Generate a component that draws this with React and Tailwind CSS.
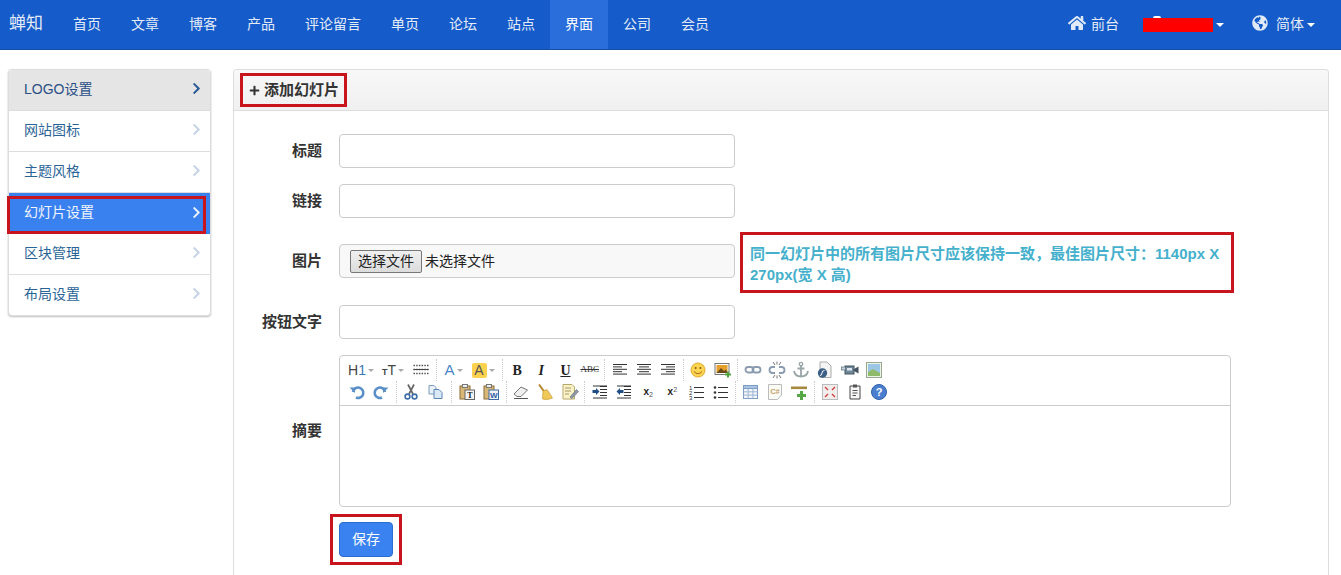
import { FaHome, FaGlobeAmericas, FaChevronRight, FaPlus } from 'react-icons/fa';

const navItems = ['首页', '文章', '博客', '产品', '评论留言', '单页', '论坛', '站点', '界面', '公司', '会员'];
const sideItems = ['LOGO设置', '网站图标', '主题风格', '幻灯片设置', '区块管理', '布局设置'];

const font = 'font-["Liberation_Sans","Noto_Sans_CJK_SC",sans-serif]';

const Caret = ({ className = '' }) => (
    <span className={`inline-block w-0 h-0 border-x-[4px] border-x-transparent border-t-[4px] border-t-white ${className}`} />
);

const Ic = ({ children }) => (
    <svg width="18" height="18" viewBox="0 0 18 18" className="block">{children}</svg>
);

const Lines = ({ rows, color = '#333' }) => (
    <Ic>
        {rows.map(([x1, x2], i) => (
            <line key={i} x1={x1} x2={x2} y1={3.5 + i * 2.4} y2={3.5 + i * 2.4} stroke={color} strokeWidth="1" />
        ))}
    </Ic>
);

const Slot = ({ children, w = 'w-[24.2px]' }) => (
    <div className={`${w} h-[22px] flex items-center justify-center shrink-0`}>{children}</div>
);

const Sep = () => (
    <div className="w-[6px] h-[22px] shrink-0 flex justify-center">
        <div className="h-full border-l border-dotted border-[#ccc]" />
    </div>
);

const SmallCaret = () => (
    <span className="inline-block ml-[2px] w-0 h-0 border-x-[3px] border-x-transparent border-t-[3px] border-t-[#aaa]" />
);

const row1 = (
    <>
        <Slot w="w-[32px]"><span className="text-[14px] text-[#444]">H<span className="text-[#3a78b8]">1</span></span><SmallCaret /></Slot>
        <Slot w="w-[32px]"><span className="text-[#444] font-bold"><span className="text-[9px]">T</span><span className="text-[14px] font-normal">T</span></span><SmallCaret /></Slot>
        <Slot w="w-[23px]">
            <Ic>
                {[4.5, 8.5, 12.5].map((y) => (
                    <line key={y} x1="1.5" x2="16.5" y1={y} y2={y} stroke="#555" strokeWidth="1.5" strokeDasharray="1.5 1.2" />
                ))}
                <line x1="1.5" x2="16.5" y1="8.5" y2="8.5" stroke="#444" strokeWidth="1" />
            </Ic>
        </Slot>
        <Slot w="w-[8px]"><Sep /></Slot>
        <Slot w="w-[27px]"><span className="text-[15px] text-[#4a86c8]">A</span><SmallCaret /></Slot>
        <Slot w="w-[32px]"><span className="w-[15px] h-[15px] rounded-[2px] bg-[#fcd24e] text-[14px] leading-[15px] text-center text-[#555]">A</span><SmallCaret /></Slot>
        <Sep />
        <Slot><span className="font-['Liberation_Serif',serif] font-bold text-[14px] text-[#222]">B</span></Slot>
        <Slot><span className="font-['Liberation_Serif',serif] font-bold italic text-[14px] text-[#222]">I</span></Slot>
        <Slot><span className="font-['Liberation_Serif',serif] font-bold underline text-[14px] text-[#222]">U</span></Slot>
        <Slot><span className="font-['Liberation_Serif',serif] line-through text-[9px] text-[#333]">ABC</span></Slot>
        <Sep />
        <Slot><Lines rows={[[2, 16], [2, 11], [2, 16], [2, 11], [2, 16]]} /></Slot>
        <Slot><Lines rows={[[2, 16], [4, 14], [2, 16], [4, 14], [2, 16]]} /></Slot>
        <Slot><Lines rows={[[2, 16], [7, 16], [2, 16], [7, 16], [2, 16]]} /></Slot>
        <Sep />
        <Slot>
            <Ic>
                <circle cx="9" cy="9" r="7" fill="#fbd450" stroke="#e3a92e" />
                <circle cx="6.6" cy="7" r="1" fill="#8a5a10" />
                <circle cx="11.4" cy="7" r="1" fill="#8a5a10" />
                <path d="M5 10.5 Q9 15 13 10.5" fill="none" stroke="#a8681a" strokeWidth="1" />
            </Ic>
        </Slot>
        <Slot>
            <Ic>
                <rect x="1" y="2.5" width="14" height="11" fill="#fff" stroke="#777" />
                <rect x="2.5" y="4" width="11" height="8" fill="#e5a02b" />
                <path d="M2.5 12 L7 7 L10 10 L12 8.5 L13.5 12 Z" fill="#6b4a1c" />
                <path d="M13 10.5 h2 v2 h2 v2 h-2 v2 h-2 v-2 h-2 v-2 h2 z" fill="#4fa53c" />
            </Ic>
        </Slot>
        <Sep />
        <Slot>
            <Ic>
                <rect x="1.5" y="6" width="8" height="5.5" rx="2.7" fill="none" stroke="#8a9bb0" strokeWidth="1.8" />
                <rect x="8.5" y="6" width="8" height="5.5" rx="2.7" fill="none" stroke="#8a9bb0" strokeWidth="1.8" />
            </Ic>
        </Slot>
        <Slot>
            <Ic>
                <path d="M7 6 H4.5 a2.7 2.7 0 0 0 0 6 H7 M11 6 h2.5 a2.7 2.7 0 0 1 0 6 H11" fill="none" stroke="#8a9bb0" strokeWidth="1.8" />
                <path d="M5 1 L7 4 M9 0.5 V3.5 M13 1 L11 4 M5 17 L7 14 M9 17.5 V14.5 M13 17 L11 14" stroke="#777" strokeWidth="1" />
            </Ic>
        </Slot>
        <Slot>
            <Ic>
                <circle cx="9" cy="3" r="1.7" fill="none" stroke="#9aa5a8" strokeWidth="1.3" />
                <path d="M9 4.5 V15.5 M5.5 7.5 H12.5 M2 10 Q3 15.5 9 15.5 Q15 15.5 16 10" fill="none" stroke="#9aa5a8" strokeWidth="1.8" />
            </Ic>
        </Slot>
        <Slot>
            <Ic>
                <path d="M4 1 H11 L15 5 V16.5 H4 Z" fill="#f4f4f4" stroke="#aaa" />
                <circle cx="6.5" cy="12" r="4.7" fill="#3c5f86" />
                <path d="M8.5 9.5 Q6 9.5 6 12 Q6 14.5 4 14.5" fill="none" stroke="#fff" strokeWidth="1" />
            </Ic>
        </Slot>
        <Slot>
            <Ic>
                <rect x="4" y="5" width="9" height="8" fill="#6e8799" stroke="#44535f" />
                <rect x="0.5" y="6" width="4" height="3" fill="#c6d5df" stroke="#5b6d7a" strokeWidth=".7" />
                <path d="M13 8 L17.5 5.5 V12.5 L13 10 Z" fill="#44535f" />
                <rect x="6" y="7" width="5" height="2.5" fill="#dfe8ee" />
            </Ic>
        </Slot>
        <Slot>
            <Ic>
                <rect x="1.5" y="1.5" width="15" height="15" fill="#eef3e8" stroke="#97a88f" />
                <rect x="3" y="3" width="12" height="12" fill="#9cc6e6" />
                <path d="M3 15 V11 L8 8 L15 12 V15 Z" fill="#8fba6a" />
            </Ic>
        </Slot>
    </>
);

const row2 = (
    <>
        <Slot>
            <Ic>
                <path d="M5 9 A5.2 5.2 0 1 1 8 14.5" fill="none" stroke="#5b8fc8" strokeWidth="2.6" />
                <path d="M1.5 4.5 H7 V10 Z" fill="#5b8fc8" />
            </Ic>
        </Slot>
        <Slot>
            <Ic>
                <path d="M13 9 A5.2 5.2 0 1 0 10 14.5" fill="none" stroke="#5b8fc8" strokeWidth="2.6" />
                <path d="M16.5 4.5 H11 V10 Z" fill="#5b8fc8" />
            </Ic>
        </Slot>
        <Sep />
        <Slot>
            <Ic>
                <path d="M6 1.5 L11 11 M12 1.5 L7 11" stroke="#666" strokeWidth="1.7" />
                <circle cx="5.5" cy="13.5" r="2.4" fill="none" stroke="#3e6fa8" strokeWidth="1.6" />
                <circle cx="12.5" cy="13.5" r="2.4" fill="none" stroke="#3e6fa8" strokeWidth="1.6" />
            </Ic>
        </Slot>
        <Slot>
            <Ic>
                <path d="M2 2.5 H7 L9 4.5 V11 H2 Z" fill="#e8f0f8" stroke="#7b9cc0" />
                <path d="M7 6.5 H12 L15 9.5 V15.5 H7 Z" fill="#dbe8f5" stroke="#5b84b3" />
            </Ic>
        </Slot>
        <Slot w="w-[7px]"><Sep /></Slot>
        <Slot>
            <Ic>
                <rect x="2" y="3" width="10" height="13" fill="#d8b878" stroke="#8d6c33" />
                <rect x="4.5" y="1.5" width="5" height="3" fill="#eee" stroke="#777" />
                <rect x="7" y="7" width="9.5" height="9.5" fill="#f3f3f3" stroke="#666" />
                <text x="11.8" y="15" textAnchor="middle" fontSize="8" fontWeight="700" fontFamily="Liberation Serif" fill="#222">T</text>
            </Ic>
        </Slot>
        <Slot>
            <Ic>
                <rect x="2" y="3" width="10" height="13" fill="#d8b878" stroke="#8d6c33" />
                <rect x="4.5" y="1.5" width="5" height="3" fill="#eee" stroke="#777" />
                <rect x="7" y="7" width="9.5" height="9.5" fill="#f3f3f3" stroke="#3d6ca8" />
                <text x="11.8" y="15" textAnchor="middle" fontSize="8" fontWeight="700" fontFamily="Liberation Sans" fill="#2a5fa8">W</text>
            </Ic>
        </Slot>
        <Slot w="w-[6px]"><Sep /></Slot>
        <Slot>
            <Ic>
                <path d="M2 11 L9 4 L15.5 7 L9 13.5 H5 Z" fill="#f0f0f0" stroke="#777" />
                <line x1="2" x2="16" y1="15.5" y2="15.5" stroke="#555" strokeWidth="1" />
            </Ic>
        </Slot>
        <Slot>
            <Ic>
                <path d="M3 1.5 L8.5 9" stroke="#b5842c" strokeWidth="2" />
                <path d="M7 8 L11 6.5 L16.5 15 Q11 17.5 6.5 16 Z" fill="#efc95a" stroke="#c89a30" strokeWidth=".7" />
            </Ic>
        </Slot>
        <Slot>
            <Ic>
                <path d="M2 1.5 H11 L13.5 4 V16 H2 Z" fill="#fbf3c8" stroke="#b7a66a" />
                <path d="M4 5 H10 M4 8 H10 M4 11 H8" stroke="#a89868" strokeWidth="1" />
                <path d="M9 14 L15.5 6.5 L17.5 8.5 L11 15.5 Z" fill="#8f9aa8" stroke="#5f6773" strokeWidth=".6" />
            </Ic>
        </Slot>
        <Sep />
        <Slot>
            <Ic>
                <path d="M9 3.5 H16 M9 6.5 H16 M9 9.5 H16 M9 12.5 H16 M2 3 H16 M2 15 H16" stroke="#333" strokeWidth="1" />
                <path d="M1.5 7 H5 V5 L8.5 8.5 L5 12 V10 H1.5 Z" fill="#1f4f85" />
            </Ic>
        </Slot>
        <Slot>
            <Ic>
                <path d="M9 3.5 H16 M9 6.5 H16 M9 9.5 H16 M9 12.5 H16 M2 3 H16 M2 15 H16" stroke="#333" strokeWidth="1" />
                <path d="M8.5 7 H5 V5 L1.5 8.5 L5 12 V10 H8.5 Z" fill="#1f4f85" />
            </Ic>
        </Slot>
        <Slot><span className="text-[10px] font-bold text-[#222] leading-none">x<sub className="text-[7px] font-normal text-[#555]">2</sub></span></Slot>
        <Slot><span className="text-[10px] font-bold text-[#222] leading-none">x<sup className="text-[7px] font-normal text-[#555]">2</sup></span></Slot>
        <Slot>
            <Ic>
                <text x="1" y="7" fontSize="6" fill="#333" fontFamily="Liberation Sans">1</text>
                <text x="1" y="12" fontSize="6" fill="#333" fontFamily="Liberation Sans">2</text>
                <text x="1" y="17" fontSize="6" fill="#333" fontFamily="Liberation Sans">3</text>
                <path d="M6 4.5 H16 M6 9.5 H16 M6 14.5 H16" stroke="#333" strokeWidth="1" />
            </Ic>
        </Slot>
        <Slot>
            <Ic>
                <circle cx="3" cy="4.5" r="1.3" fill="#333" />
                <circle cx="3" cy="9.5" r="1.3" fill="#333" />
                <circle cx="3" cy="14.5" r="1.3" fill="#333" />
                <path d="M6 4.5 H16 M6 9.5 H16 M6 14.5 H16" stroke="#333" strokeWidth="1" />
            </Ic>
        </Slot>
        <Sep />
        <Slot>
            <Ic>
                <rect x="1.5" y="2.5" width="14" height="13" fill="#f2f6fb" stroke="#7d9cc4" />
                <rect x="1.5" y="2.5" width="14" height="3" fill="#a9c3e3" stroke="#7d9cc4" />
                <path d="M6.2 5.5 V15.5 M10.9 5.5 V15.5 M1.5 8.8 H15.5 M1.5 12.1 H15.5" stroke="#9fb6d3" strokeWidth="1" />
            </Ic>
        </Slot>
        <Slot>
            <Ic>
                <path d="M2.5 1.5 H15.5 V12 L11.5 16.5 H2.5 Z" fill="#fbfbf5" stroke="#bbb" />
                <text x="9" y="11" textAnchor="middle" fontSize="7.5" fontWeight="700" fill="#c5a06a" fontFamily="Liberation Sans">C#</text>
            </Ic>
        </Slot>
        <Slot>
            <Ic>
                <rect x="1" y="3.5" width="16" height="2.6" fill="#a5893f" />
                <path d="M10 8 h3 v3 h3 v3 h-3 v3 h-3 v-3 h-3 v-3 h3 z" fill="#55a846" />
            </Ic>
        </Slot>
        <Slot w="w-[7px]"><Sep /></Slot>
        <Slot>
            <Ic>
                <rect x="1.5" y="1.5" width="15" height="15" fill="#f3eeee" stroke="#bbb" />
                <path d="M4 4 L7 7 M14 4 L11 7 M4 14 L7 11 M14 14 L11 11" stroke="#d0403c" strokeWidth="1.4" />
            </Ic>
        </Slot>
        <Slot>
            <Ic>
                <path d="M4 3 H14 V16 H4 Z" fill="#f6f6f6" stroke="#444" />
                <rect x="7" y="1.5" width="4" height="3" fill="#555" />
                <path d="M6.5 7.5 H11.5 M6.5 10 H11.5 M6.5 12.5 H10" stroke="#555" strokeWidth="1" />
            </Ic>
        </Slot>
        <Slot>
            <Ic>
                <circle cx="9" cy="9" r="7.5" fill="#4a7fd0" stroke="#2d5fa8" />
                <text x="9" y="13" textAnchor="middle" fontSize="11" fontWeight="700" fill="#fff" fontFamily="Liberation Sans">?</text>
            </Ic>
        </Slot>
    </>
);

const labelCls = 'w-[88px] shrink-0 text-right text-[15px] font-bold leading-[33px] text-[#333]';

const FormRow = ({ label, mt = '', children }) => (
    <div className={`flex items-start ${mt}`}>
        <label className={labelCls}>{label}</label>
        <div className="ml-[17px]">{children}</div>
    </div>
);

const TextBox = () => (
    <input className="block w-[396px] h-[34px] rounded-[4px] border border-[#ccc] bg-white" />
);

export default function App() {
    return (
        <div className={`h-[575px] overflow-hidden bg-white ${font}`}>
            <nav className="h-[50px] flex bg-[#155bc9] border-b border-[#12509f] text-[14px] text-[#e4ecf8]">
                <span className="ml-[9px] mr-[15px] text-[17px] leading-[47px]">蝉知</span>
                {navItems.map((item) => (
                    <a key={item} className={`px-[15px] leading-[49px] ${item === '界面' ? 'bg-[#2a6edb] text-white' : ''}`}>
                        {item}
                    </a>
                ))}
                <div className="ml-auto mr-[26px] flex items-center leading-[49px]">
                    <FaHome className="text-[18px] text-[#dfe9f7] -mt-[3px]" />
                    <span className="ml-[5px]">前台</span>
                    <div className="relative ml-[24px] w-[70px] h-[14px] bg-[#fe0000]">
                        <span className="absolute left-[10px] -top-[2px] w-[8px] h-[2px] rounded-t bg-white" />
                    </div>
                    <Caret className="ml-[3px]" />
                    <FaGlobeAmericas className="ml-[28px] text-[16px] text-[#dfe9f7] -mt-[3px]" />
                    <span className="ml-[8px]">简体</span>
                    <Caret className="ml-[3px]" />
                </div>
            </nav>

            <div className="flex items-start pt-[19px] pl-[8px]">
                <aside className="w-[203px] shrink-0 rounded-[4px] border border-[#ddd] bg-white shadow-[0_1px_2px_rgba(0,0,0,0.25)]">
                    {sideItems.map((item, i) => (
                        <div
                            key={item}
                            className={`relative h-[41px] last:h-[40px] flex items-center justify-between pl-[15px] pr-[7px] text-[14px] ${
                                i === 0
                                    ? 'bg-[#e5e5e5] text-[#2a4f85] border-b border-[#ddd] rounded-t-[4px]'
                                    : i === 3
                                    ? 'bg-[#3a81f0] text-[#f2f6fd]'
                                    : 'text-[#2a6496] border-b border-[#ddd] last:border-b-0'
                            }`}
                        >
                            <span className="pb-[2px]">{item}</span>
                            <FaChevronRight
                                className={`text-[13px] -mt-[3px] ${
                                    i === 0 ? 'text-[#2a5a96]' : i === 3 ? 'text-[#e8f0fc]' : 'text-[#c5d3e6]'
                                }`}
                            />
                            {i === 3 && (
                                <span className="absolute -left-[2px] top-[3px] w-[199px] h-[38px] border-[3px] border-[#c8141c]" />
                            )}
                        </div>
                    ))}
                </aside>

                <main className="ml-[22px] w-[1096px] shrink-0 rounded-t-[4px] border border-[#ddd] border-b-0 bg-white">
                    <div className="h-[41px] pt-[3px] pl-[6px] rounded-t-[4px] border-b border-[#ddd] bg-gradient-to-b from-[#f8f8f8] to-[#f0f0f0]">
                        <div className="inline-flex items-center h-[34px] w-[107px] border-[3px] border-[#c8141c] pl-[6px] text-[15px] font-bold text-[#333]">
                            <FaPlus className="text-[11px] mr-[4px]" />
                            添加幻灯片
                        </div>
                    </div>

                    <div className="pt-[23px] pb-[40px]">
                        <FormRow label="标题"><TextBox /></FormRow>
                        <FormRow label="链接" mt="mt-[16px]"><TextBox /></FormRow>
                        <div className="flex items-start mt-[14px]">
                            <label className={`${labelCls} mt-[12px]`}>图片</label>
                            <div className="ml-[17px] mt-[12px] w-[396px] h-[34px] flex items-center pl-[10px] rounded-[4px] border border-[#ccc] bg-[#f8f8f8] text-[14px] text-[#222]">
                                <button className="h-[23px] w-[72px] rounded-[2px] border border-[#777] bg-gradient-to-b from-[#f0f0f0] to-[#dcdcdc] leading-[20px]">选择文件</button>
                                <span className="ml-[3px]">未选择文件</span>
                            </div>
                            <div className="ml-[5px] w-[494px] h-[61px] border-[3px] border-[#c8141c] pl-[7px] pr-[4px] py-[8px] text-[15px] font-bold leading-[21px] text-[#45b0cc]">
                                同一幻灯片中的所有图片尺寸应该保持一致，最佳图片尺寸：1140px X 270px(宽 X 高)
                            </div>
                        </div>
                        <FormRow label="按钮文字" mt="mt-[12px]"><TextBox /></FormRow>
                        <div className="flex items-start mt-[16px]">
                            <label className={`${labelCls} mt-[59px]`}>摘要</label>
                            <div className="ml-[17px] w-[892px] h-[152px] rounded-[4px] border border-[#ccc] bg-white">
                                <div className="h-[50px] pt-[3px] pl-[5px] border-b border-[#ccc]">
                                    <div className="flex h-[22px]">{row1}</div>
                                    <div className="flex h-[22px]">{row2}</div>
                                </div>
                            </div>
                        </div>
                        <div className="ml-[96px] mt-[7px] w-[72px] h-[51px] border-[3px] border-[#c8141c] pt-[5px] pl-[6px]">
                            <button className="block w-[54px] h-[35px] rounded-[4px] border border-[#2a6ed0] bg-[#3a82f0] text-[14px] text-white">保存</button>
                        </div>
                    </div>
                </main>
            </div>
        </div>
    );
}
